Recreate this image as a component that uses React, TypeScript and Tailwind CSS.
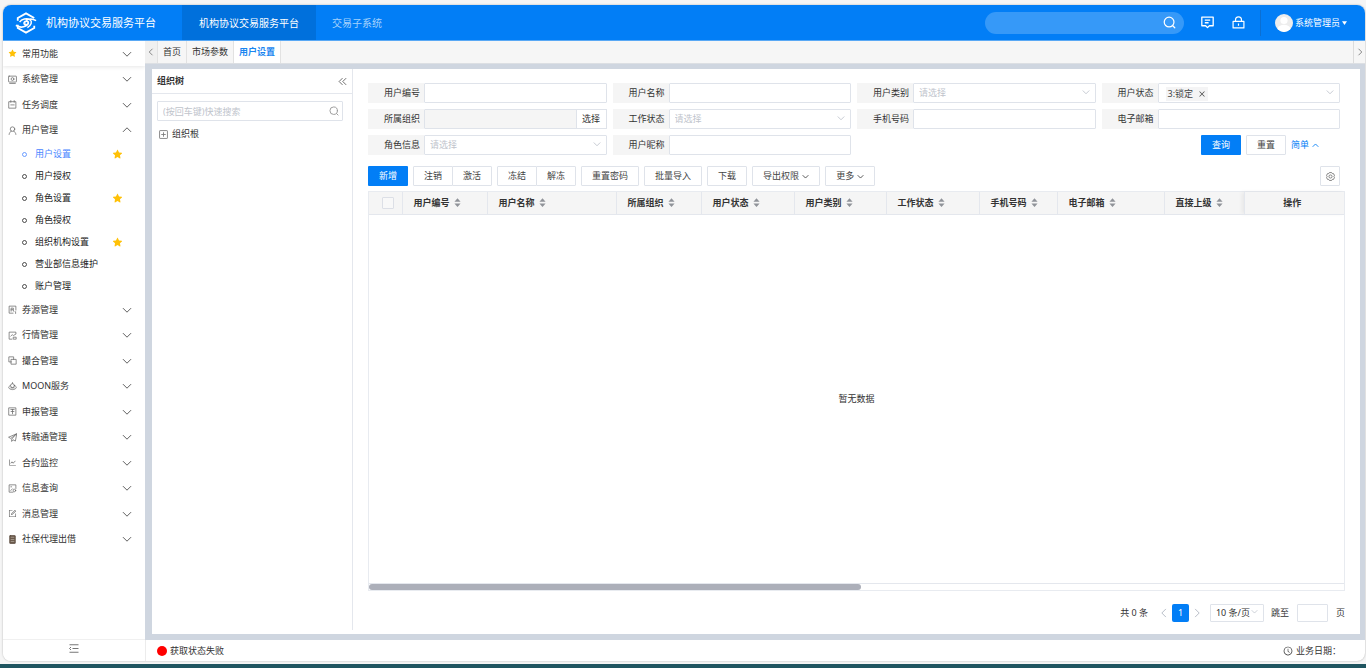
import React, { useState } from 'react';
import clsx from 'clsx';
import {
  AiFillStar,
  AiOutlineClockCircle,
  AiOutlineClose,
  AiOutlineLineChart,
  AiOutlineForm,
} from 'react-icons/ai';

interface SubItem {
  label: string;
  starred?: boolean;
}

interface MenuItem {
  label: string;
  icon: React.ReactNode;
  children?: SubItem[];
}

const Glyph: React.FC<{ children: React.ReactNode }> = ({ children }) => (
  <svg viewBox="0 0 16 16" className="w-[9px] h-[9px]" fill="none" stroke="currentColor" strokeWidth="1.3" strokeLinejoin="round" strokeLinecap="round" aria-hidden="true">
    {children}
  </svg>
);

// Thin chevrons, wide and shallow
const chevrons = {
  down: 'M1.500 5 8 11.500 14.500 5',
  up: 'M1.500 11 8 4.500 14.500 11',
  left: 'M11 1.500 4.500 8 11 14.500',
  right: 'M5 1.500 11.500 8 5 14.500',
  doubleLeft: 'M8 2 2 8l6 6M14.500 2l-6 6 6 6',
};

const Chevron: React.FC<{ to: keyof typeof chevrons; className: string; bold?: boolean }> = ({ to, className, bold }) => (
  <svg viewBox="0 0 16 16" className={className} fill="none" stroke="currentColor" strokeWidth={bold ? 2 : 1.5} aria-hidden="true">
    <path d={chevrons[to]} />
  </svg>
);

const SearchIcon: React.FC<{ className: string }> = ({ className }) => (
  <svg viewBox="0 0 16 16" className={className} fill="none" stroke="currentColor" strokeWidth="1.500" strokeLinecap="round" aria-hidden="true">
    <circle cx="7.500" cy="7.500" r="6" />
    <path d="m12 12 2.500 2.500" />
  </svg>
);

const menu: MenuItem[] = [
  { label: '常用功能', icon: <AiFillStar className="w-[9px] h-[9px] text-[#ffc107]" /> },
  {
    label: '系统管理',
    icon: <Glyph><rect x="1" y="2" width="14" height="10.500" rx="1" /><circle cx="8" cy="7.200" r="2.500" /><path d="M3 15h10" /></Glyph>,
  },
  {
    label: '任务调度',
    icon: <Glyph><path d="M2 3h12v11.500H2ZM5 1v3M11 1v3M5 8.700h6" /></Glyph>,
  },
  {
    label: '用户管理',
    icon: <Glyph><circle cx="8" cy="5.500" r="4" /><path d="M2 15c.3-3 1.800-5 4-5.800M14 15c-.3-3-1.800-5-4-5.800" /></Glyph>,
    children: [
      { label: '用户设置', starred: true },
      { label: '用户授权' },
      { label: '角色设置', starred: true },
      { label: '角色授权' },
      { label: '组织机构设置', starred: true },
      { label: '营业部信息维护' },
      { label: '账户管理' },
    ],
  },
  {
    label: '券源管理',
    icon: <Glyph><path d="M14 9V2H2v12.500h7" /><path d="M5.500 11V5.500h4v3h-4M9 8.500l1.500 3M13.500 12v3" /></Glyph>,
  },
  {
    label: '行情管理',
    icon: <Glyph><path d="M14 4.500V2H2v12.500h5" /><path d="M5 9l2.500-2.500L9.500 8 14 5.500M10 11h4.500v3.500H10Z" /></Glyph>,
  },
  {
    label: '撮合管理',
    icon: <Glyph><path d="M6 10.500H1.500v-9h8.500V6" /><rect x="6" y="6" width="8.500" height="8.500" /></Glyph>,
  },
  {
    label: 'MOON服务',
    icon: <Glyph><circle cx="8" cy="6.500" r="3.500" /><path d="M4 6.500C1.500 7.500.8 9 1.500 10.500c2 4 11 4 13 0 .7-1.500 0-3-2.500-4M5 10.500h6M8 1v1.500" /></Glyph>,
  },
  {
    label: '申报管理',
    icon: <Glyph><rect x="2" y="1.500" width="12" height="13" /><path d="M5 4.500h6M8 12V4.500M5.500 8h5" /></Glyph>,
  },
  {
    label: '转融通管理',
    icon: <Glyph><path d="M15 1.500 1 7.500l4 2.200L15 1.500 6.500 11v4l2.300-3 3.700 2Z" /></Glyph>,
  },
  { label: '合约监控', icon: <AiOutlineLineChart className="w-[9px] h-[9px]" /> },
  {
    label: '信息查询',
    icon: <Glyph><path d="M14 8V1.500H2v13h7" /><path d="M5 5h1.500M5 11.500 8 8.500" /><circle cx="11.500" cy="11.500" r="2.200" /></Glyph>,
  },
  { label: '消息管理', icon: <AiOutlineForm className="w-[9px] h-[9px]" /> },
  {
    label: '社保代理出借',
    icon: (
      <Glyph>
        <rect x="3" y="1" width="10" height="14" rx="1" fill="#6b5a4c" stroke="#5a4a3e" />
        <path d="M5.500 4h5M5.500 8h5M5.500 11.500h5" stroke="#c9c0b6" strokeWidth="1" />
      </Glyph>
    ),
  },
];

const columns = [
  { label: '用户编号', width: 'w-[85px]' },
  { label: '用户名称', width: 'w-[129px]' },
  { label: '所属组织', width: 'w-[85px]' },
  { label: '用户状态', width: 'w-[93px]' },
  { label: '用户类别', width: 'w-[92px]' },
  { label: '工作状态', width: 'w-[93px]' },
  { label: '手机号码', width: 'w-[78px]' },
  { label: '电子邮箱', width: 'w-[107px]' },
  { label: '直接上级', width: '' },
];

const control = 'w-full h-5 px-[5px] border border-[#dfe3ea] rounded-[1px] outline-none';
const plainButton = 'h-5 px-[10px] border border-[#dfe3ea] rounded-[1px] bg-white text-[#444] flex items-center gap-[3px] whitespace-nowrap';

const Field: React.FC<{ id: string; label: string; children: React.ReactNode }> = ({ id, label, children }) => (
  <div className="flex h-5">
    <label htmlFor={id} className="w-14 shrink-0 pr-1 bg-[#f5f5f5] flex items-center justify-end">{label}</label>
    <div className="relative flex-1 min-w-0 flex">{children}</div>
  </div>
);

const SelectField: React.FC<{ id: string; label: string; placeholder?: string; children?: React.ReactNode }> = ({ id, label, placeholder = '', children }) => (
  <Field id={id} label={label}>
    <select id={id} className={clsx(control, 'appearance-none bg-white text-[#c0c4cc]')}>
      <option>{placeholder}</option>
    </select>
    {children}
    <Chevron to="down" className="absolute right-[6px] top-[5px] w-2 h-2 text-[#b4bac4] pointer-events-none" />
  </Field>
);

const SortIcon = () => (
  <svg viewBox="0 0 8 10" className="w-[7px] h-[9px]" fill="#909399" aria-hidden="true">
    <path d="M4 0 7.500 4H.5ZM4 10 .5 6h7Z" />
  </svg>
);

const Header = () => (
  <header className="h-9 shrink-0 bg-[#027ef6] border-b border-[#5aa9f5] text-white flex items-stretch">
    <div className="w-[179px] shrink-0 pl-3 flex items-center gap-[9px]">
      <svg viewBox="0 0 24 24" className="w-[22px] h-[22px]" fill="none" stroke="white" strokeWidth="2" aria-hidden="true">
        <path d="M3 9V6.500L12 1.500l9 5M3 9.500V6.500M21 15v2.500L12 22.500l-9-5V14" />
        <path d="M1 14.500C4 16.500 8.500 17 12 15c2.500-1.400 3.500-4 1.500-4.800-1.700-.6-3.800.6-3.500 2.300.2 1 1.500 1.300 2.500.8" />
        <path d="M23 9.500C20 7.500 15.500 7 12 9M5 11c2-3 8-5 11.500-2.500 2.500 2 1.500 6-3 8.500" strokeWidth="1.600" />
      </svg>
      <h1 className="text-[11px]">机构协议交易服务平台</h1>
    </div>
    <nav className="flex text-[10px]">
      <a href="#platform" className="px-4 bg-[#0070dc] w-[134px] flex items-center justify-center whitespace-nowrap">机构协议交易服务平台</a>
      <a href="#sub" className="px-4 flex items-center whitespace-nowrap text-[#a5d2fc]">交易子系统</a>
    </nav>
    <div className="ml-auto pr-[18px] flex items-center">
      <div className="relative">
        <input aria-label="搜索" className="w-[199px] h-[22px] rounded-full bg-[#3699f8] pl-3 pr-7 outline-none" />
        <SearchIcon className="absolute right-2 top-1 w-[13px] h-[13px]" />
      </div>
      <button aria-label="消息" className="ml-[17px]">
        <svg viewBox="0 0 24 24" className="w-[13px] h-[13px]" fill="none" stroke="white" strokeWidth="2.400" strokeLinejoin="round">
          <path d="M1.500 2h21v16h-7L12 21.500 8.500 18h-7Z" />
          <path d="M7 7.500h10M7 12.500h7" />
        </svg>
      </button>
      <button aria-label="锁屏" className="ml-[18px]">
        <svg viewBox="0 0 24 24" className="w-[13px] h-[13px]" fill="none" stroke="white" strokeWidth="2.200" strokeLinejoin="round">
          <path d="M2 10h20v12H2ZM6.500 10V7a5.500 5.500 0 0 1 11 0v3M12 14v4" />
        </svg>
      </button>
      <span className="ml-[15px] mr-[14px] w-px h-[26px] bg-[#0b6fd2]" />
      <button className="flex items-center gap-[2px]">
        <svg viewBox="0 0 18 18" className="w-[18px] h-[18px]" aria-hidden="true">
          <circle cx="9" cy="9" r="9" fill="#ededed" />
          <circle cx="9" cy="6.500" r="3.600" fill="white" />
          <path d="M2.500 14.800c1-3 3.500-4 6.500-4s5.500 1 6.500 4A9 9 0 0 1 9 18a9 9 0 0 1-6.500-3.200Z" fill="white" />
        </svg>
        系统管理员
        <svg viewBox="0 0 8 6" className="w-[5px] h-[4px]" fill="white" aria-hidden="true"><path d="M0 0h8L4 6Z" /></svg>
      </button>
    </div>
  </header>
);

const Sidebar = () => {
  const [active, setActive] = useState('用户设置');
  return (
    <aside className="w-[142px] shrink-0 bg-white flex flex-col">
      <nav className="flex-1 min-h-0 overflow-hidden">
        {menu.map((item, i) => (
          <div key={item.label} className="group">
            <button
              className={clsx(
                'w-full h-[25px] group-even:h-[26px] pl-[5px] pr-[13px] flex items-center',
                i === 0 && 'shadow-[0_1px_4px_rgba(0,0,0,0.10)]',
              )}
            >
              <span className="w-[14px] shrink-0 text-[#666]">{item.icon}</span>
              {item.label}
              <Chevron to={item.children ? 'up' : 'down'} className="ml-auto w-[10px] h-[10px] text-[#555]" />
            </button>
            {item.children && (
              <ul>
                {item.children.map((sub) => (
                  <li key={sub.label}>
                    <button
                      onClick={() => setActive(sub.label)}
                      className={clsx('w-full h-[22px] pl-[19px] pr-[22px] flex items-center', active === sub.label ? 'text-[#4a86ff]' : 'text-[#222]')}
                    >
                      <svg viewBox="0 0 10 10" className="w-[5px] h-[5px] mr-2" fill="none" stroke="currentColor" strokeWidth="1.600" aria-hidden="true">
                        <circle cx="5" cy="5" r="4" />
                      </svg>
                      {sub.label}
                      {sub.starred && <AiFillStar className="ml-auto w-[11px] h-[11px] text-[#ffc107]" />}
                    </button>
                  </li>
                ))}
              </ul>
            )}
          </div>
        ))}
      </nav>
      <button aria-label="收起菜单" className="h-[22px] border-t border-[#f0f0f0] flex items-center justify-center pb-1">
        <svg viewBox="0 0 20 18" className="w-[10px] h-[9px]" fill="none" stroke="#666" strokeWidth="1.800">
          <path d="M1 1.500h18M7 9h12M1 16.500h18M4 6 1 9l3 3" />
        </svg>
      </button>
    </aside>
  );
};

const PageTabs = () => (
  <div className="h-[23px] shrink-0 bg-[#f6f6f6] border-b border-[#dcdfe3] flex items-stretch">
    <button aria-label="向左" className="w-[13px] bg-[#f0f0f0] border-r border-[#e2e2e2] flex items-center justify-center text-[#888]">
      <Chevron to="left" bold className="w-2 h-2" />
    </button>
    <a href="#home" className="px-[5px] border-r border-[#e2e2e2] flex items-center">首页</a>
    <a href="#market" className="px-[5px] border-r border-[#e2e2e2] flex items-center">市场参数</a>
    <a href="#users" className="px-[5px] border-r border-[#e2e2e2] bg-white flex items-center font-bold text-[#1a86f0]">用户设置</a>
    <button aria-label="向右" className="ml-auto w-[12px] border-l border-[#dcdcdc] flex items-center justify-center text-[#888]">
      <Chevron to="right" bold className="w-2 h-2" />
    </button>
  </div>
);

const OrgTree = () => (
  <section className="w-[201px] shrink-0 mb-1 border-r border-[#e4e7ed]">
    <div className="h-[25px] pl-[5px] pr-[5px] border-b border-[#e4e7ed] flex items-center justify-between">
      <h2 className="font-bold">组织树</h2>
      <button aria-label="收起"><Chevron to="doubleLeft" className="w-[9px] h-[9px] text-[#555]" /></button>
    </div>
    <div className="relative mt-[7px] ml-[5px] mr-[9px]">
      <input aria-label="快速搜索" placeholder="(按回车键)快速搜索" className={clsx(control, 'bg-white placeholder:text-[#c0c4cc]')} />
      <SearchIcon className="absolute right-1 top-[5px] w-[10px] h-[10px] text-[#999]" />
    </div>
    <button className="mt-[6px] ml-[7px] flex items-center gap-1">
      <svg viewBox="0 0 16 16" className="w-[9px] h-[9px]" fill="none" stroke="#777" strokeWidth="1.500" aria-hidden="true">
        <rect x="1" y="1" width="14" height="14" rx="1" />
        <path d="M8 4v8M4 8h8" />
      </svg>
      组织根
    </button>
  </section>
);

const SearchForm = () => (
  <form className="mr-[5px] grid grid-cols-4 gap-[6px]" onSubmit={(e) => e.preventDefault()}>
    <Field id="code" label="用户编号"><input id="code" className={control} /></Field>
    <Field id="name" label="用户名称"><input id="name" className={control} /></Field>
    <SelectField id="type" label="用户类别" placeholder="请选择" />
    <SelectField id="status" label="用户状态">
      <span className="absolute left-[8px] top-1 h-[14px] px-[2px] bg-[#f4f4f5] flex items-center gap-[5px] text-[#444]">
        3:锁定
        <button type="button" aria-label="移除"><AiOutlineClose className="w-2 h-2" /></button>
      </span>
    </SelectField>
    <Field id="org" label="所属组织">
      <input id="org" disabled className={clsx(control, 'flex-1 bg-[#f5f5f5]')} />
      <button type="button" className="-ml-px w-[31px] shrink-0 border border-[#dfe3ea] bg-white">选择</button>
    </Field>
    <SelectField id="work" label="工作状态" placeholder="请选择" />
    <Field id="phone" label="手机号码"><input id="phone" className={control} /></Field>
    <Field id="mail" label="电子邮箱"><input id="mail" className={control} /></Field>
    <SelectField id="role" label="角色信息" placeholder="请选择" />
    <Field id="nick" label="用户昵称"><input id="nick" className={control} /></Field>
    <div className="col-span-2 pr-[21px] flex items-center justify-end gap-[5px]">
      <button className="h-5 w-10 rounded-[1px] bg-[#027ef6] text-white">查询</button>
      <button type="reset" className={plainButton}>重置</button>
      <button type="button" className="flex items-center gap-[3px] text-[#027ef6]">
        简单
        <Chevron to="up" className="w-[7px] h-[7px]" bold />
      </button>
    </div>
  </form>
);

const Toolbar = () => (
  <div className="mt-[11px] mr-[5px] flex gap-[5px]">
    <button className="h-5 w-10 rounded-[1px] bg-[#027ef6] text-white">新增</button>
    <div className="flex">
      <button className={plainButton}>注销</button>
      <button className={clsx(plainButton, '-ml-px')}>激活</button>
    </div>
    <div className="flex">
      <button className={plainButton}>冻结</button>
      <button className={clsx(plainButton, '-ml-px')}>解冻</button>
    </div>
    <button className={plainButton}>重置密码</button>
    <button className={plainButton}>批量导入</button>
    <button className={plainButton}>下载</button>
    <button className={plainButton}>导出权限 <Chevron to="down" className="w-[7px] h-[7px]" bold /></button>
    <button className={plainButton}>更多 <Chevron to="down" className="w-[7px] h-[7px]" bold /></button>
    <button aria-label="设置" className="ml-auto w-5 h-5 border border-[#dfe3ea] rounded-[1px] flex items-center justify-center">
      <svg viewBox="0 0 16 16" className="w-[9px] h-[9px]" fill="none" stroke="#666" strokeWidth="1.400" strokeLinejoin="round">
        <path d="M6 1h4l1.200 1.800 2.300.2L15 6.300 14 8l1 1.700-1.500 3.300-2.300.2L10 15H6l-1.200-1.800-2.300-.2L1 9.700 2 8 1 6.300 2.500 3l2.300-.2Z" />
        <circle cx="8" cy="8" r="2.800" />
      </svg>
    </button>
  </div>
);

const UserTable = () => (
  <div className="mt-[5px] flex-1 min-h-0 border border-[#e8ebf0] flex flex-col">
    <table className="w-full table-fixed border-collapse">
      <thead>
        <tr className="h-[22px] bg-[#f5f5f5] border-b border-[#e4e7ed]">
          <th className="w-[33px] border-r border-[#e4e7ed]">
            <input type="checkbox" aria-label="全选" className="appearance-none block ml-[13px] w-3 h-3 border border-[#dcdfe6] rounded-[1px] bg-[#f8f8f8]" />
          </th>
          {columns.map((col) => (
            <th key={col.label} className={clsx('pl-[11px] border-r border-[#e4e7ed] font-bold', col.width)}>
              <span className="flex items-center gap-1">{col.label} <SortIcon /></span>
            </th>
          ))}
          <th className="w-[100px] pr-1 font-bold shadow-[-2px_0_4px_rgba(0,0,0,0.06)]">操作</th>
        </tr>
      </thead>
    </table>
    <p className="flex-1 flex items-center justify-center">暂无数据</p>
    <div className="h-[7px] border-t border-[#e4e7ed]">
      <div className="w-[50.500%] h-[6px] rounded-full bg-[#acafb9]" />
    </div>
  </div>
);

const Pagination = () => (
  <div className="h-[43px] shrink-0 flex items-center justify-end">
    <span>共 0 条</span>
    <button aria-label="上一页" className="ml-[11px]"><Chevron to="left" className="w-[10px] h-[10px] text-[#b4bac4]" /></button>
    <button className="mx-[3px] w-[17px] h-[18px] rounded-[2px] bg-[#027ef6] text-white">1</button>
    <button aria-label="下一页"><Chevron to="right" className="w-[10px] h-[10px] text-[#b4bac4]" /></button>
    <div className="relative ml-2">
      <select aria-label="每页条数" className="block appearance-none w-[54px] h-[18px] pl-[5px] border border-[#dfe3ea] rounded-[1px] bg-white">
        <option>10 条/页</option>
      </select>
      <Chevron to="down" className="absolute right-[6px] top-[4px] w-[7px] h-[7px] text-[#b4bac4] pointer-events-none" />
    </div>
    <label htmlFor="jump" className="ml-[7px]">跳至</label>
    <input id="jump" className="mx-2 w-[31px] h-[18px] border border-[#dfe3ea] rounded-[1px]" />
    <span>页</span>
  </div>
);

const App: React.FC = () => {
  return (
    <div className="h-screen flex flex-col bg-[#f5f5f5] text-[9px] leading-[14px] text-[#333] font-['Noto_Sans','Noto_Sans_CJK_SC',sans-serif]">
      <div className="flex-1 min-h-0 mt-[5px] mb-[3px] ml-[3px] mr-px rounded-lg overflow-hidden bg-white shadow-[0_0_2px_rgba(0,0,0,0.3)] flex flex-col">
        <Header />
        <div className="flex-1 min-h-0 flex">
          <Sidebar />
          <div className="flex-1 min-w-0 flex flex-col">
            <PageTabs />
            <main className="flex-1 min-h-0 pt-[5px] pb-[6px] pl-[7px] pr-[5px] bg-[#cfd6e0] flex">
              <div className="flex-1 min-w-0 bg-white flex">
                <OrgTree />
                <section className="flex-1 min-w-0 pt-[14px] pl-[15px] pr-[15px] flex flex-col">
                  <SearchForm />
                  <Toolbar />
                  <UserTable />
                  <Pagination />
                </section>
              </div>
            </main>
            <footer className="h-[21px] shrink-0 pl-[11px] pr-6 border-l border-[#ececec] flex items-center justify-between">
              <span className="flex items-center gap-[3px]">
                <span className="w-[10px] h-[10px] rounded-full bg-[#ff0000]" />
                获取状态失败
              </span>
              <span className="flex items-center gap-[3px]">
                <AiOutlineClockCircle className="w-[10px] h-[10px]" />
                业务日期：
              </span>
            </footer>
          </div>
        </div>
      </div>
      <div className="h-1 shrink-0 bg-[#1f5560]" />
    </div>
  );
};

export default App;
